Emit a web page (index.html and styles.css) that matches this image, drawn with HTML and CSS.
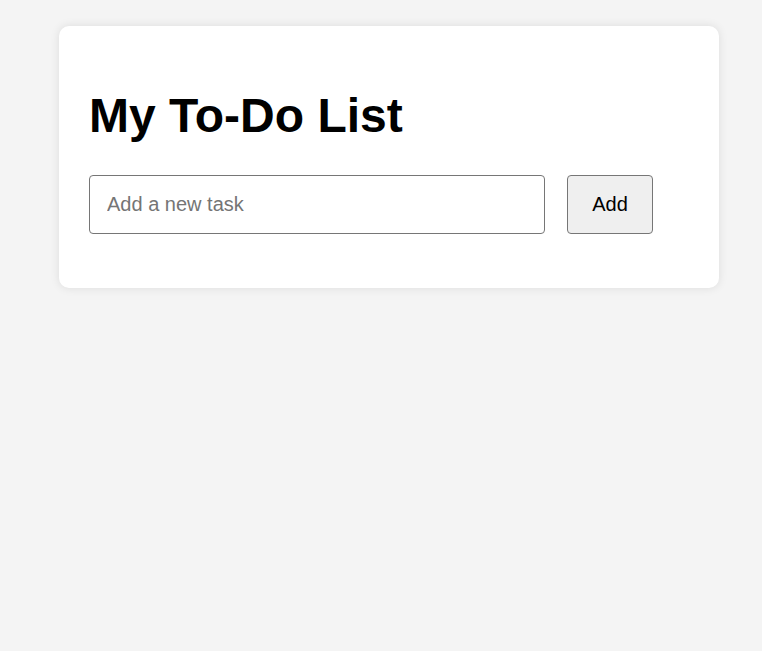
FILE: index.html
```html
<!DOCTYPE html>
<html lang="en">
<head>
<meta charset="utf-8">
<title>My To-Do List</title>
<link rel="stylesheet" href="styles.css">
</head>
<body>
  <div class="card">
    <h1 class="title">My To-Do List</h1>
    <form class="add-form">
      <input class="task-input" type="text" placeholder="Add a new task">
      <button class="add-btn" type="button">Add</button>
    </form>
    <ul class="task-list"></ul>
  </div>
</body>
</html>
```

FILE: styles.css
```css
html, body {
  margin: 0;
  padding: 0;
}
body {
  background: #f4f4f4;
  font-family: "Liberation Sans", Arial, sans-serif;
  min-height: 651px;
}
.card {
  box-sizing: border-box;
  width: 660px;
  margin: 26px 0 0 59px;
  padding: 30px;
  background: #fff;
  border-radius: 10px;
  box-shadow: 0 0 10px rgba(0, 0, 0, 0.1);
}
.title {
  font-size: 48px;
  font-weight: bold;
  margin: 32px 0;
  color: #000;
}
.add-form {
  display: flex;
  gap: 22px;
  margin: 0 0 24px 0;
}
.task-input {
  box-sizing: border-box;
  width: 456px;
  height: 59px;
  padding: 0 17px;
  font-family: "Liberation Sans", Arial, sans-serif;
  font-size: 20px;
  border: 1px solid #767676;
  border-radius: 4px;
  color: #000;
}
.task-input::placeholder {
  color: #757575;
}
.add-btn {
  box-sizing: border-box;
  width: 86px;
  height: 59px;
  padding: 0;
  font-family: "Liberation Sans", Arial, sans-serif;
  font-size: 20px;
  background: #efefef;
  border: 1px solid #767676;
  border-radius: 4px;
  color: #000;
}
.task-list {
  margin: 0;
  padding: 0;
  list-style: none;
}
```
